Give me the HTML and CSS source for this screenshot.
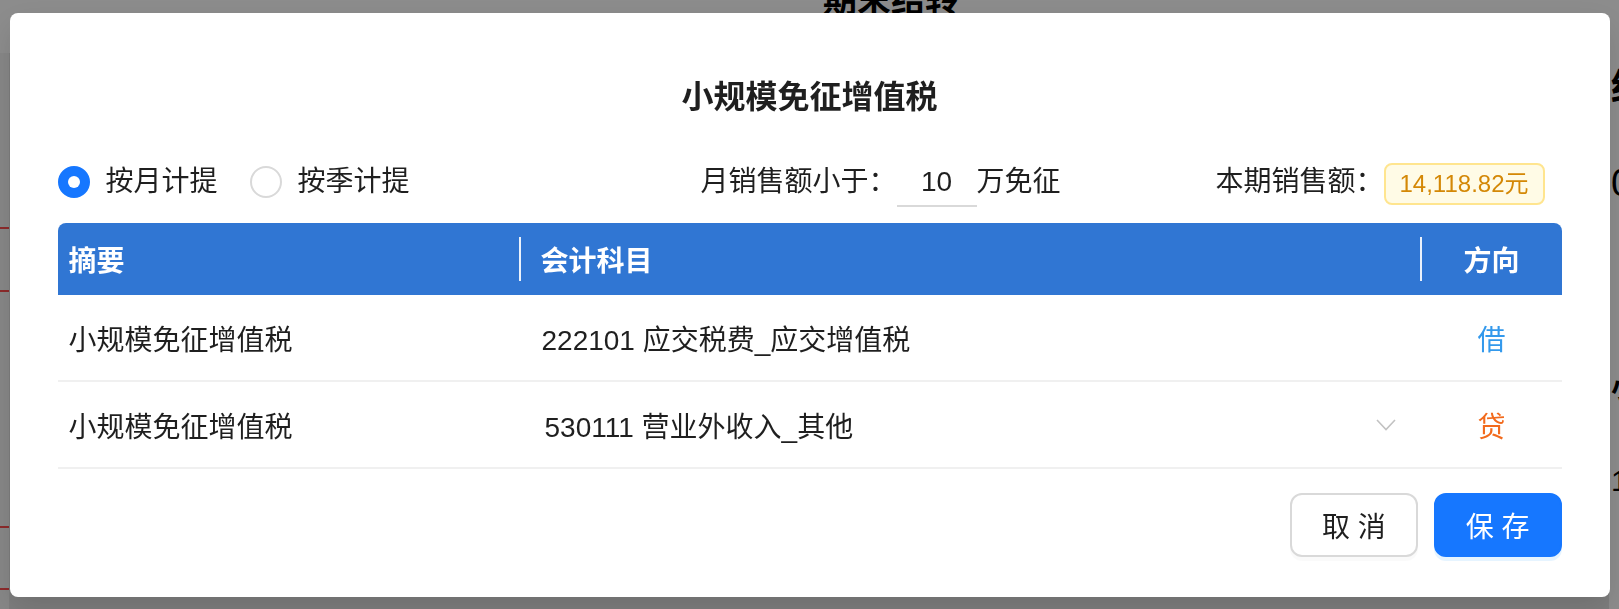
FILE: index.html
```html
<!DOCTYPE html>
<html lang="zh-CN">
<head>
<meta charset="utf-8">
<title>小规模免征增值税</title>
<link rel="stylesheet" href="styles.css">
</head>
<body>
<div class="page">
  <div class="page-top"><span class="page-title">期末结转</span></div>
  <div class="page-body">
    <div class="side-left">
      <i class="red-line rl1"></i>
      <i class="red-line rl2"></i>
      <i class="red-line rl3"></i>
      <i class="red-line rl4"></i>
    </div>
    <div class="page-main"></div>
    <div class="side-right">
      <span class="cut cut0">结</span>
      <span class="cut cut1">0</span>
      <span class="cut cut2">小</span>
      <span class="cut cut3">1</span>
    </div>
  </div>
</div>

<div class="mask"></div>

<div class="modal-wrap">
  <div class="modal">
    <h2 class="modal-title">小规模免征增值税</h2>

    <div class="toolbar">
      <div class="radio-group">
        <label class="radio checked"><span class="radio-circle"></span><span class="radio-text">按月计提</span></label>
        <label class="radio"><span class="radio-circle"></span><span class="radio-text">按季计提</span></label>
      </div>
      <div class="limit">月销售额小于：<span class="limit-input">10</span>万免征</div>
      <div class="sales">本期销售额：<span class="tag">14,118.82元</span></div>
    </div>

    <div class="table">
      <div class="thead">
        <div class="th c1h">摘要</div>
        <div class="sep"></div>
        <div class="th c2h">会计科目</div>
        <div class="sep"></div>
        <div class="th c3">方向</div>
      </div>
      <div class="tr">
        <div class="td c1">小规模免征增值税</div>
        <div class="td c2">222101 应交税费_应交增值税</div>
        <div class="td c3 debit">借</div>
      </div>
      <div class="tr">
        <div class="td c1">小规模免征增值税</div>
        <div class="td c2 select">
          <span class="select-text">530111 营业外收入_其他</span>
          <svg class="chevron" width="20" height="12" viewBox="0 0 20 12"><polyline points="1,1 10,10.5 19,1" fill="none" stroke="#c2c2c2" stroke-width="1.6"/></svg>
        </div>
        <div class="td c3 credit">贷</div>
      </div>
    </div>

    <div class="footer">
      <button class="btn">取 消</button>
      <button class="btn primary">保 存</button>
    </div>
  </div>
</div>
</body>
</html>
```

FILE: styles.css
```css
html, body {
  margin: 0;
  padding: 0;
}

body {
  width: 1619px;
  height: 609px;
  overflow: hidden;
  font-family: "Liberation Sans", "Noto Sans CJK SC", sans-serif;
  color: #1f1f1f;
  background: #e4e4e4;
}

/* ---------- page behind the dialog ---------- */
.page {
  width: 1619px;
  height: 609px;
  display: flex;
  flex-direction: column;
}

.page-top {
  height: 53px;
  background: #ffffff;
  padding-left: 823px;
}

.page-title {
  display: block;
  margin-top: -20px;
  font-size: 34px;
  line-height: 40px;
  font-weight: 700;
  color: #000;
}

.page-body {
  flex: 1;
  display: flex;
}

.side-left {
  width: 9px;
  display: flex;
  flex-direction: column;
  background: #f5f5f5;
}

.red-line {
  display: block;
  height: 2px;
  background: #ff4d4f;
}
.rl1 { margin-top: 174px; }
.rl2 { margin-top: 61px; }
.rl3 { margin-top: 234px; }
.rl4 { margin-top: 60px; }

.page-main {
  flex: 1;
  border-left: 176px solid #e4e4e4;
}

.side-right {
  width: 10px;
  background: #ffffff;
  display: flex;
  flex-direction: column;
  overflow: hidden;
}

.cut {
  display: block;
  color: #000;
  line-height: 1;
  padding-left: 2px;
  white-space: nowrap;
}
.cut0 { margin-top: 17px; font-size: 36px; font-weight: 700; }
.cut1 { margin-top: 58px; font-size: 38px; }
.cut2 { margin-top: 173px; font-size: 28px; font-weight: 700; }
.cut3 { margin-top: 63px; font-size: 30px; }

/* ---------- mask + dialog ---------- */
.mask {
  position: fixed;
  inset: 0;
  background: rgba(0, 0, 0, 0.45);
}

.modal-wrap {
  position: fixed;
  inset: 0;
  display: flex;
  justify-content: center;
  align-items: flex-start;
  padding-top: 13px;
}

.modal {
  width: 1600px;
  box-sizing: border-box;
  padding: 62px 48px 40px;
  background: #ffffff;
  border-radius: 8px;
  box-shadow: 0 12px 32px rgba(0, 0, 0, 0.12);
}

.modal-title {
  margin: 0;
  text-align: center;
  font-size: 32px;
  line-height: 44px;
  font-weight: 700;
  color: #1f1f1f;
}

/* ---------- toolbar ---------- */
.toolbar {
  margin-top: 41px;
  height: 44px;
  display: flex;
  align-items: center;
  padding-right: 17px;
  font-size: 28px;
  line-height: 44px;
}

.radio-group {
  display: flex;
  align-items: center;
}

.radio {
  display: flex;
  align-items: center;
  margin-right: 32px;
}
.radio:last-child {
  margin-right: 0;
}

.radio-circle {
  width: 32px;
  height: 32px;
  box-sizing: border-box;
  border: 2px solid #d9d9d9;
  border-radius: 50%;
  background: #ffffff;
  display: flex;
  align-items: center;
  justify-content: center;
}

.radio.checked .radio-circle {
  border-color: #1677ff;
  background: #1677ff;
}
.radio.checked .radio-circle::after {
  content: "";
  width: 12px;
  height: 12px;
  border-radius: 50%;
  background: #ffffff;
}

.radio-text {
  padding-left: 16px;
}

.limit {
  margin-left: 291px;
  display: flex;
  align-items: center;
}

.limit-input {
  display: inline-block;
  width: 80px;
  height: 46px;
  line-height: 46px;
  margin-top: 2px;
  text-align: center;
  border-bottom: 2px solid #d9d9d9;
}

.sales {
  margin-left: auto;
  display: flex;
  align-items: center;
}

.tag {
  display: inline-block;
  height: 42px;
  box-sizing: border-box;
  margin-top: 4px;
  padding: 0 14px;
  line-height: 38px;
  font-size: 24px;
  color: #d48806;
  background: #fffbe6;
  border: 2px solid #ffe58f;
  border-radius: 8px;
}

/* ---------- table ---------- */
.table {
  margin-top: 19px;
  font-size: 28px;
}

.thead {
  height: 72px;
  display: flex;
  align-items: center;
  background: #3076d3;
  border-radius: 8px 8px 0 0;
  color: #ffffff;
  font-weight: 700;
}

.th {
  box-sizing: border-box;
}

.c1h { width: 461px; padding-left: 11px; }
.c2h { width: 899px; padding-left: 20px; }

.sep {
  width: 2px;
  height: 44px;
  background: rgba(255, 255, 255, 0.9);
}

.tr {
  height: 87px;
  box-sizing: border-box;
  display: flex;
  align-items: center;
  border-bottom: 2px solid #f0f0f0;
}

.td {
  box-sizing: border-box;
}

.c1 { width: 463px; padding-left: 11px; }
.c2 { width: 901px; padding-left: 21px; }
.c3 { width: 140px; text-align: center; }

.select {
  display: flex;
  align-items: center;
  padding-left: 24px;
  padding-right: 26px;
}

.chevron {
  margin-left: auto;
}

.debit { color: #3399ec; }
.credit { color: #f26a1c; }

/* ---------- footer ---------- */
.footer {
  margin-top: 24px;
  display: flex;
  justify-content: flex-end;
  gap: 16px;
}

.btn {
  height: 64px;
  padding: 0 30px;
  box-sizing: border-box;
  font-family: "Liberation Sans", "Noto Sans CJK SC", sans-serif;
  font-size: 28px;
  color: #1f1f1f;
  background: #ffffff;
  border: 2px solid #d9d9d9;
  border-radius: 12px;
  box-shadow: 0 4px 0 rgba(0, 0, 0, 0.02);
}

.btn.primary {
  color: #ffffff;
  background: #1677ff;
  border-color: #1677ff;
  box-shadow: 0 4px 0 rgba(5, 145, 255, 0.1);
}
```
